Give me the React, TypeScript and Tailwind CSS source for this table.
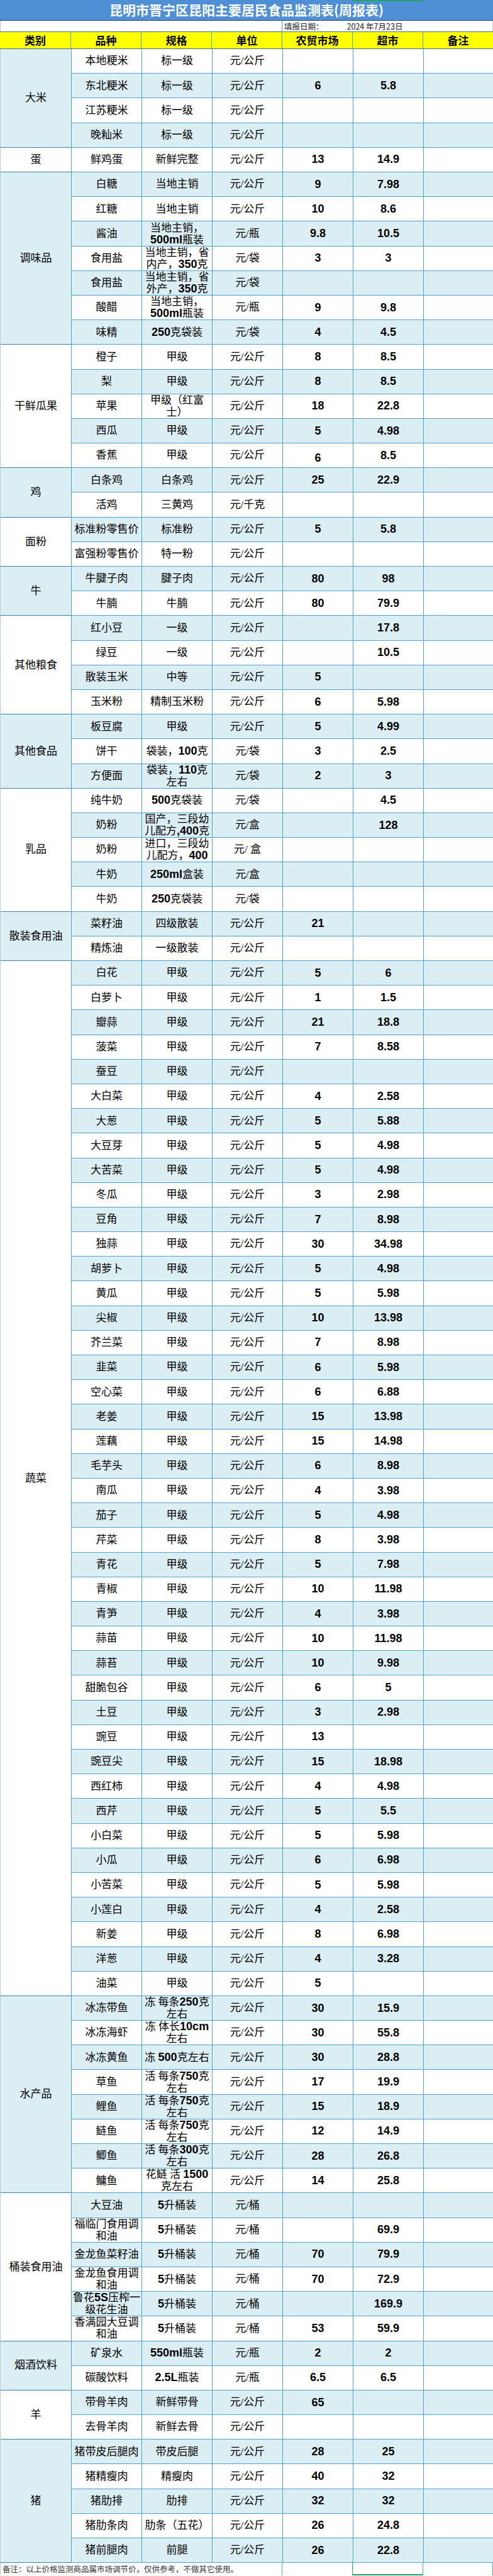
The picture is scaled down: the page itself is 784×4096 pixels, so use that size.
import clsx from "clsx";

type Row = {
  name: string;
  spec: string;
  unit: string;
  farm: string;
  mart: string;
  low?: boolean;
};

type Group = { cat: string; rows: Row[] };

const row = (
  name: string,
  spec: string,
  unit: string,
  farm = "",
  mart = "",
  low = false
): Row => ({ name, spec, unit, farm, mart, low });

// 蔬菜：规格均为甲级，单位元/公斤
const VEG: [string, string, string][] = [
  ["白花", "5", "6"],
  ["白萝卜", "1", "1.5"],
  ["瓣蒜", "21", "18.8"],
  ["菠菜", "7", "8.58"],
  ["蚕豆", "", ""],
  ["大白菜", "4", "2.58"],
  ["大葱", "5", "5.88"],
  ["大豆芽", "5", "4.98"],
  ["大苦菜", "5", "4.98"],
  ["冬瓜", "3", "2.98"],
  ["豆角", "7", "8.98"],
  ["独蒜", "30", "34.98"],
  ["胡萝卜", "5", "4.98"],
  ["黄瓜", "5", "5.98"],
  ["尖椒", "10", "13.98"],
  ["芥兰菜", "7", "8.98"],
  ["韭菜", "6", "5.98"],
  ["空心菜", "6", "6.88"],
  ["老姜", "15", "13.98"],
  ["莲藕", "15", "14.98"],
  ["毛芋头", "6", "8.98"],
  ["南瓜", "4", "3.98"],
  ["茄子", "5", "4.98"],
  ["芹菜", "8", "3.98"],
  ["青花", "5", "7.98"],
  ["青椒", "10", "11.98"],
  ["青笋", "4", "3.98"],
  ["蒜苗", "10", "11.98"],
  ["蒜苔", "10", "9.98"],
  ["甜脆包谷", "6", "5"],
  ["土豆", "3", "2.98"],
  ["豌豆", "13", ""],
  ["豌豆尖", "15", "18.98"],
  ["西红柿", "4", "4.98"],
  ["西芹", "5", "5.5"],
  ["小白菜", "5", "5.98"],
  ["小瓜", "6", "6.98"],
  ["小苦菜", "5", "5.98"],
  ["小莲白", "4", "2.58"],
  ["新姜", "8", "6.98"],
  ["洋葱", "4", "3.28"],
  ["油菜", "5", ""],
];

const GROUPS: Group[] = [
  {
    cat: "大米",
    rows: [
      row("本地粳米", "标一级", "元/公斤"),
      row("东北粳米", "标一级", "元/公斤", "6", "5.8"),
      row("江苏粳米", "标一级", "元/公斤"),
      row("晚籼米", "标一级", "元/公斤"),
    ],
  },
  { cat: "蛋", rows: [row("鲜鸡蛋", "新鲜完整", "元/公斤", "13", "14.9")] },
  {
    cat: "调味品",
    rows: [
      row("白糖", "当地主销", "元/公斤", "9", "7.98"),
      row("红糖", "当地主销", "元/公斤", "10", "8.6"),
      row("酱油", "当地主销，\n500ml瓶装", "元/瓶", "9.8", "10.5"),
      row("食用盐", "当地主销，省\n内产，350克", "元/袋", "3", "3"),
      row("食用盐", "当地主销，省\n外产，350克", "元/袋"),
      row("酸醋", "当地主销，\n500ml瓶装", "元/瓶", "9", "9.8"),
      row("味精", "250克袋装", "元/袋", "4", "4.5"),
    ],
  },
  {
    cat: "干鲜瓜果",
    rows: [
      row("橙子", "甲级", "元/公斤", "8", "8.5"),
      row("梨", "甲级", "元/公斤", "8", "8.5"),
      row("苹果", "甲级（红富\n士）", "元/公斤", "18", "22.8"),
      row("西瓜", "甲级", "元/公斤", "5", "4.98"),
      row("香蕉", "甲级", "元/公斤", "6", "8.5", true),
    ],
  },
  {
    cat: "鸡",
    rows: [
      row("白条鸡", "白条鸡", "元/公斤", "25", "22.9"),
      row("活鸡", "三黄鸡", "元/千克"),
    ],
  },
  {
    cat: "面粉",
    rows: [
      row("标准粉零售价", "标准粉", "元/公斤", "5", "5.8"),
      row("富强粉零售价", "特一粉", "元/公斤"),
    ],
  },
  {
    cat: "牛",
    rows: [
      row("牛腱子肉", "腱子肉", "元/公斤", "80", "98"),
      row("牛腩", "牛腩", "元/公斤", "80", "79.9"),
    ],
  },
  {
    cat: "其他粮食",
    rows: [
      row("红小豆", "一级", "元/公斤", "", "17.8"),
      row("绿豆", "一级", "元/公斤", "", "10.5"),
      row("散装玉米", "中等", "元/公斤", "5", ""),
      row("玉米粉", "精制玉米粉", "元/公斤", "6", "5.98"),
    ],
  },
  {
    cat: "其他食品",
    rows: [
      row("板豆腐", "甲级", "元/公斤", "5", "4.99"),
      row("饼干", "袋装，100克", "元/袋", "3", "2.5"),
      row("方便面", "袋装，110克\n左右", "元/袋", "2", "3"),
    ],
  },
  {
    cat: "乳品",
    rows: [
      row("纯牛奶", "500克袋装", "元/袋", "", "4.5"),
      row("奶粉", "国产，三段幼\n儿配方,400克", "元/盒", "", "128"),
      row("奶粉", "进口，三段幼\n儿配方，400\n克", "元/ 盒"),
      row("牛奶", "250ml盒装", "元/盒"),
      row("牛奶", "250克袋装", "元/袋"),
    ],
  },
  {
    cat: "散装食用油",
    rows: [
      row("菜籽油", "四级散装", "元/公斤", "21", ""),
      row("精炼油", "一级散装", "元/公斤"),
    ],
  },
  { cat: "蔬菜", rows: VEG.map(([n, f, m]) => row(n, "甲级", "元/公斤", f, m)) },
  {
    cat: "水产品",
    rows: [
      row("冰冻带鱼", "冻 每条250克\n左右", "元/公斤", "30", "15.9"),
      row("冰冻海虾", "冻 体长10cm\n左右", "元/公斤", "30", "55.8"),
      row("冰冻黄鱼", "冻 500克左右", "元/公斤", "30", "28.8"),
      row("草鱼", "活 每条750克\n左右", "元/公斤", "17", "19.9"),
      row("鲤鱼", "活 每条750克\n左右", "元/公斤", "15", "18.9"),
      row("鲢鱼", "活 每条750克\n左右", "元/公斤", "12", "14.9"),
      row("鲫鱼", "活 每条300克\n左右", "元/公斤", "28", "26.8"),
      row("鳙鱼", "花鲢 活 1500\n克左右", "元/公斤", "14", "25.8"),
    ],
  },
  {
    cat: "桶装食用油",
    rows: [
      row("大豆油", "5升桶装", "元/桶"),
      row("福临门食用调\n和油", "5升桶装", "元/桶", "", "69.9"),
      row("金龙鱼菜籽油", "5升桶装", "元/桶", "70", "79.9"),
      row("金龙鱼食用调\n和油", "5升桶装", "元/桶", "70", "72.9"),
      row("鲁花5S压榨一\n级花生油", "5升桶装", "元/桶", "", "169.9"),
      row("香满园大豆调\n和油", "5升桶装", "元/桶", "53", "59.9"),
    ],
  },
  {
    cat: "烟酒饮料",
    rows: [
      row("矿泉水", "550ml瓶装", "元/瓶", "2", "2"),
      row("碳酸饮料", "2.5L瓶装", "元/瓶", "6.5", "6.5"),
    ],
  },
  {
    cat: "羊",
    rows: [
      row("带骨羊肉", "新鲜带骨", "元/公斤", "65", ""),
      row("去骨羊肉", "新鲜去骨", "元/公斤"),
    ],
  },
  {
    cat: "猪",
    rows: [
      row("猪带皮后腿肉", "带皮后腿", "元/公斤", "28", "25"),
      row("猪精瘦肉", "精瘦肉", "元/公斤", "40", "32"),
      row("猪肋排", "肋排", "元/公斤", "32", "32"),
      row("猪肋条肉", "肋条（五花）", "元/公斤", "26", "24.8"),
      row("猪前腿肉", "前腿", "元/公斤", "26", "22.8"),
    ],
  },
];

const HEADERS = ["类别", "品种", "规格", "单位", "农贸市场", "超市", "备注"];

// ASCII runs (digits, ml, S...) are bold narrow sans, CJK stays regular serif
function Mixed({ text }: { text: string }) {
  const parts = text.split(/([0-9A-Za-z.,]+)/);
  return (
    <>
      {parts.map((p, i) =>
        /^[0-9A-Za-z.,]+$/.test(p) ? (
          <span
            key={i}
            className="font-['Liberation_Sans_Narrow','Liberation_Sans',sans-serif] text-[18px] font-bold"
          >
            {p}
          </span>
        ) : (
          <span key={i}>{p}</span>
        )
      )}
    </>
  );
}

function TextCell({ text }: { text: string }) {
  const lines = text.split("\n").length;
  return (
    <div
      className={clsx(
        "flex w-[112px] shrink-0 justify-center overflow-hidden border-l border-[#4ea3c9] px-[2px] text-center",
        lines === 1 && "items-center whitespace-nowrap",
        lines === 2 && "items-center whitespace-pre leading-[19px]",
        lines > 2 && "items-start whitespace-pre leading-[19px]"
      )}
    >
      <span>
        <Mixed text={text} />
      </span>
    </div>
  );
}

function NumCell({ value, low }: { value: string; low?: boolean }) {
  return (
    <div
      className={clsx(
        "flex w-[112px] shrink-0 justify-center border-l border-[#4ea3c9] font-['Liberation_Sans_Narrow','Liberation_Sans',sans-serif] text-[18px] font-bold",
        low ? "items-end pb-[1px]" : "items-center"
      )}
    >
      {value}
    </div>
  );
}

export default function App() {
  let idx = 0;
  return (
    <div className="w-[784px] bg-white font-['Liberation_Serif','Noto_Sans_CJK_SC',serif] text-[17px] text-black">
      {/* 标题 */}
      <div className="relative flex h-[32.6px] items-center justify-center border-b border-[#2c4a68] bg-[#4f8fd6] font-['Noto_Sans_CJK_SC',sans-serif] text-[21px] font-bold text-white">
        昆明市晋宁区昆阳主要居民食品监测表(周报表)
        <span className="absolute left-[560px] top-0 h-[2px] w-[112px] bg-[#21a366]" />
      </div>

      {/* 填报日期 */}
      <div className="flex h-[17px] border-l border-r border-[#c8c8c8]">
        <div className="w-[447px] shrink-0" />
        <div className="flex items-end gap-[37px] border-l border-[#4ea3c9] pl-[3px] font-['Noto_Sans_CJK_SC',sans-serif] text-[12.5px] leading-[16px] text-[#222]">
          <span>填报日期：</span>
          <span>2024 年7月23日</span>
        </div>
      </div>

      {/* 表头 */}
      <div className="flex h-[28.5px] border-t border-b border-[#3d6f8f] bg-[#ffff00] font-['Noto_Sans_CJK_SC',sans-serif] text-[17px] font-bold">
        {HEADERS.map((h, i) => (
          <div
            key={h}
            className={clsx(
              "flex w-[112px] shrink-0 items-center justify-center border-[#4ea3c9]",
              i > 0 && "border-l"
            )}
          >
            {h}
          </div>
        ))}
      </div>

      {/* 数据 */}
      {GROUPS.map((g, gi) => (
        <div key={g.cat + gi} className="flex border-l border-r border-[#b9c9d3]">
          <div
            className={clsx(
              "flex w-[112px] shrink-0 items-center justify-center border-b border-[#3f7f9f]",
              gi % 2 === 0 ? "bg-[#daeef3]" : "bg-white"
            )}
          >
            {g.cat}
          </div>
          <div className="flex flex-col">
            {g.rows.map((r) => {
              const shaded = idx++ % 2 === 1;
              return (
                <div
                  key={idx}
                  className={clsx(
                    "flex h-[39.2px] border-b border-[#4ea3c9]",
                    shaded ? "bg-[#daeef3]" : "bg-white"
                  )}
                >
                  <TextCell text={r.name} />
                  <TextCell text={r.spec} />
                  <TextCell text={r.unit} />
                  <NumCell value={r.farm} low={r.low} />
                  <NumCell value={r.mart} />
                  <div className="w-[111px] shrink-0 border-l border-[#4ea3c9]" />
                </div>
              );
            })}
          </div>
        </div>
      ))}

      {/* 备注 */}
      <div className="flex h-[20px] border-l border-[#c8c8c8]">
        <div className="flex w-[447px] shrink-0 items-center overflow-visible whitespace-nowrap pl-[3px] font-['Noto_Sans_CJK_SC',sans-serif] text-[12.5px] text-[#333]">
          备注：以上价格监测商品属市场调节价，仅供参考，不做其它使用。
        </div>
        <div className="w-[112px] shrink-0 border-l border-[#4ea3c9]" />
        <div className="w-[112px] shrink-0 border-b-2 border-l border-[#21a366]" />
        <div className="w-[112px] shrink-0 border-l border-r border-[#4ea3c9]" />
      </div>
    </div>
  );
}
